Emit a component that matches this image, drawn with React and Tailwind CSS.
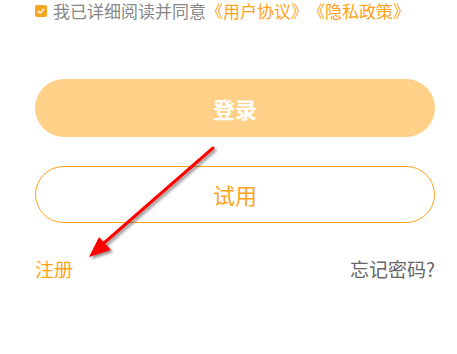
import React from 'react';

const font = { fontFamily: '"Noto Sans CJK SC", "Noto Sans", sans-serif' };

const Arrow = () => (
  <svg className="absolute left-0 top-0 pointer-events-none" width="457" height="354" viewBox="0 0 457 354">
    <defs>
      <filter id="sh" x="-20%" y="-20%" width="140%" height="140%">
        <feDropShadow dx="2" dy="2" stdDeviation="1.5" floodColor="#000" floodOpacity="0.45" />
      </filter>
    </defs>
    <g filter="url(#sh)">
      <line x1="213" y1="148" x2="104" y2="243" stroke="#f00" strokeWidth="3" strokeLinecap="round" />
      <polygon points="89,257 99,237 111,250" fill="#f00" />
    </g>
  </svg>
);

export default function App() {
  return (
    <div className="relative w-[457px] h-[354px] bg-white overflow-hidden [text-spacing-trim:space-all]" style={font}>
      <div className="pl-[35px] pr-[22px]">
        <div className="flex items-center h-[22px]">
          <span className="shrink-0 w-[12px] h-[12px] rounded-[2px] bg-[#f5a623] flex items-center justify-center mr-[6px]">
            <svg width="8" height="8" viewBox="0 0 8 8">
              <path d="M1.2 4.2 L3.2 6 L6.8 2.2" stroke="#fff" strokeWidth="1.4" fill="none" strokeLinecap="round" strokeLinejoin="round" />
            </svg>
          </span>
          <span className="text-[17px] leading-[22px] text-[#888888] whitespace-nowrap">
            我已详细阅读并同意
            <span className="text-[#ffa31a]">《用户协议》《隐私政策》</span>
          </span>
        </div>

        <button className="mt-[57px] w-full h-[58px] rounded-full bg-[#ffd088] text-white text-[22px] font-bold flex items-center justify-center">
          登录
        </button>

        <button className="mt-[29px] w-full h-[57px] rounded-full border border-[#ffa31a] bg-white text-[#ffa31a] text-[22px] flex items-center justify-center">
          试用
        </button>

        <div className="mt-[33px] flex items-center justify-between text-[19px] leading-[26px]">
          <span className="text-[#ffa31a]">注册</span>
          <span className="text-[#666666]">忘记密码?</span>
        </div>
      </div>
      <Arrow />
    </div>
  );
}
